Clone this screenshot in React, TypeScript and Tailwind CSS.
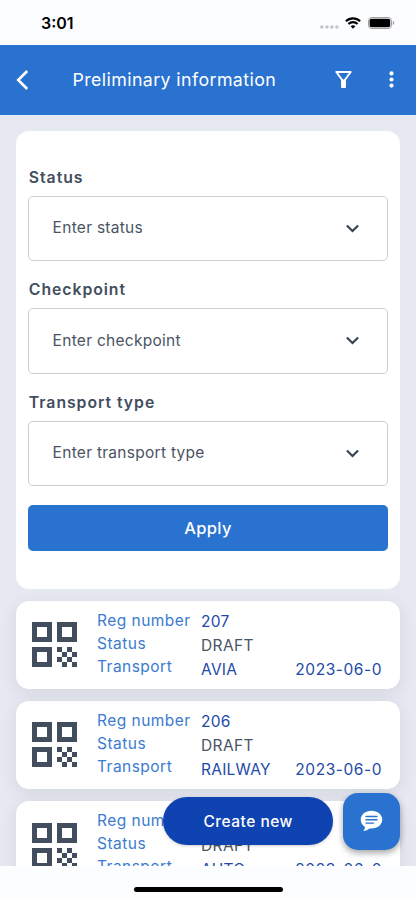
import React from "react";

const filters = [
  { label: "Status", placeholder: "Enter status" },
  { label: "Checkpoint", placeholder: "Enter checkpoint" },
  { label: "Transport type", placeholder: "Enter transport type" },
];

const records = [
  { reg: "207", status: "DRAFT", transport: "AVIA", date: "2023-06-0" },
  { reg: "206", status: "DRAFT", transport: "RAILWAY", date: "2023-06-0" },
  { reg: "205", status: "DRAFT", transport: "AUTO", date: "2023-06-0" },
];

function StatusBar() {
  return (
    <div className="flex h-[44.5px] shrink-0 items-center bg-[#fcfdff] pl-[41px] pr-[21px] pt-[2px]">
      <span className="text-[16px] font-semibold leading-none text-black">3:01</span>
      <div className="ml-auto flex items-center">
        <svg className="mt-[8px] mr-[6px]" width="19" height="4" viewBox="0 0 19 4" fill="#c4c4c6">
          <circle cx="1.9" cy="2" r="1.8" />
          <circle cx="6.9" cy="2" r="1.8" />
          <circle cx="11.9" cy="2" r="1.8" />
          <circle cx="16.9" cy="2" r="1.8" />
        </svg>
        <svg className="mr-[7px]" width="16" height="12" viewBox="0 0 16 12" fill="none" stroke="#000" strokeWidth="2.1">
          <path d="M0.9 4.3a10.2 10.2 0 0 1 14.2 0" />
          <path d="M3.4 7a6.7 6.7 0 0 1 9.2 0" />
          <path d="M8 11.7L5.7 9.3a3.3 3.3 0 0 1 4.6 0z" fill="#000" stroke="none" />
        </svg>
        <svg width="27" height="12" viewBox="0 0 27 12">
          <rect x="0.5" y="0.5" width="23" height="11" rx="3.2" fill="none" stroke="#a0a0a2" />
          <rect x="1.6" y="1.8" width="20.6" height="8.4" rx="1.8" fill="#000" />
          <path d="M24.8 4v4c.9-.3 1.4-1.1 1.4-2s-.5-1.7-1.4-2z" fill="#a0a0a2" />
        </svg>
      </div>
    </div>
  );
}

function Header() {
  return (
    <header className="flex h-[70px] shrink-0 items-center bg-[#2972cf] text-white">
      <svg className="ml-[16px]" width="13" height="20" viewBox="0 0 13 20" fill="none" stroke="#fff" strokeWidth="2.6">
        <path d="M11.2 1L2.2 10l9 9" />
      </svg>
      <h1 className="ml-[43.5px] whitespace-nowrap text-[17.8px] leading-none tracking-[0.4px]">Preliminary information</h1>
      <svg className="ml-auto mr-[37px]" width="17" height="17" viewBox="0 0 17 17" fill="none" stroke="#fff" strokeWidth="1.9">
        <path d="M1.3 1h14.4L10 8.7v7.4H7V8.700z" strokeLinejoin="round" />
        <path d="M8.5 8.5v7.5" strokeWidth="3" />
      </svg>
      <svg className="mr-[22px]" width="5" height="17" viewBox="0 0 5 17" fill="#fff">
        <circle cx="2.5" cy="2.4" r="2.1" />
        <circle cx="2.5" cy="8.5" r="2.1" />
        <circle cx="2.5" cy="14.6" r="2.1" />
      </svg>
    </header>
  );
}

function SelectField({ label, placeholder }: { label: string; placeholder: string }) {
  return (
    <div className="mb-[19.2px]">
      <div className="h-[28px] whitespace-nowrap pl-[0.5px] text-[15.8px] font-semibold leading-[20px] tracking-[0.95px] text-[#424d5e]">
        {label}
      </div>
      <div className="flex h-[65.3px] items-center rounded-[5px] border border-[#ccd0d3] pl-[23.3px] pr-[28px]">
        <span className="whitespace-nowrap pb-[1px] text-[15.5px] leading-[20px] tracking-[0.28px] text-[#4a5464]">{placeholder}</span>
        <svg className="mb-[0.5px] ml-auto" width="13" height="9" viewBox="0 0 13 9" fill="none" stroke="#374151" strokeWidth="2.1">
          <path d="M0.9 1.5l5.6 5.6 5.6-5.6" />
        </svg>
      </div>
    </div>
  );
}

function QrIcon() {
  return (
    <svg className="shrink-0" width="45" height="45" viewBox="0 0 9 9" fill="#424d5e" shapeRendering="crispEdges">
      <path fillRule="evenodd" d="M0 0h4v4h-4zM1 1v2h2v-2zM5 0h4v4h-4zM6 1v2h2v-2zM0 5h4v4h-4zM1 6v2h2v-2z" />
      <path d="M5 5h1v1h-1zM7 5h1v1h-1zM6 6h1v1h-1zM8 6h1v1h-1zM5 7h1v1h-1zM7 7h1v1h-1zM6 8h1v1h-1zM8 8h1v1h-1z" />
    </svg>
  );
}

function RecordCard({ reg, status, transport, date }: (typeof records)[number]) {
  return (
    <article className="flex h-[88.3px] shrink-0 items-center rounded-[13px] bg-white pl-[16px] shadow-[0_4px_16px_rgba(60,60,60,0.11)]">
      <QrIcon />
      <div className="ml-[20px] flex h-full w-[104px] flex-col whitespace-nowrap pt-[8.2px] text-[15.5px] leading-[23px] tracking-[0.47px] text-[#3b7bd0]">
        <span>Reg number</span>
        <span>Status</span>
        <span>Transport</span>
      </div>
      <div className="flex h-full flex-col whitespace-nowrap pt-[9.3px] text-[15.5px] leading-[24px] tracking-[0.25px] text-[#2349a8]">
        <span>{reg}</span>
        <span className="tracking-[0.4px] text-[#4a5464]">{status}</span>
        <div className="flex w-[181px] justify-between">
          <span>{transport}</span>
          <span className="tracking-[0.55px]">{date}</span>
        </div>
      </div>
    </article>
  );
}

export default function App() {
  return (
    <div className="relative flex h-[900px] w-[416px] flex-col overflow-hidden bg-[#fcfdff] font-['Inter',sans-serif]">
      <StatusBar />
      <Header />
      <main className="flex h-[751px] shrink-0 flex-col gap-[12px] overflow-hidden bg-[#e6e9f2] px-[16px] pt-[16.5px]">
        <section className="h-[457.5px] shrink-0 rounded-[13px] bg-white px-[12.3px] pt-[36.9px]">
          {filters.map((f) => (
            <SelectField key={f.label} {...f} />
          ))}
          <button className="block h-[46px] w-full rounded-[5px] bg-[#2972cf] text-[16.5px] font-medium tracking-[0.3px] text-white">Apply</button>
        </section>
        {records.map((r) => (
          <RecordCard key={r.reg} {...r} />
        ))}
      </main>
      <footer className="flex grow justify-center">
        <div className="mt-[21px] h-[5px] w-[149px] rounded-full bg-black" />
      </footer>
      <div className="absolute left-[163px] top-[793px] flex items-center gap-[10px]">
        <button className="h-[48px] w-[170.300px] rounded-full bg-[#1043b2] text-[15.5px] font-medium tracking-[0.5px] text-white shadow-[0_1px_3px_rgba(0,0,0,0.2)]">Create new</button>
        <button className="flex h-[56.5px] w-[56.5px] items-center justify-center rounded-[15px] bg-[#2972cf] shadow-[0_3px_6px_rgba(0,0,0,0.35)]">
          <svg width="23" height="22" viewBox="0 0 23 22">
            <path d="M11.5 0.7C5.3 0.7 0.7 4.7 0.7 9.6c0 3.2 1.6 5.9 4.3 7.5-.1 1.5-.8 2.9-1.6 3.9 2.3-.1 4.4-1.1 5.9-2.6.7.1 1.4.2 2.2.2 6.2 0 10.8-4 10.8-9S17.7.7 11.5.7z" fill="#fff" />
            <path d="M6 6.5h11M6 9.8h11M6 13.1h7.5" stroke="#2972cf" strokeWidth="1.4" strokeLinecap="round" />
          </svg>
        </button>
      </div>
    </div>
  );
}
